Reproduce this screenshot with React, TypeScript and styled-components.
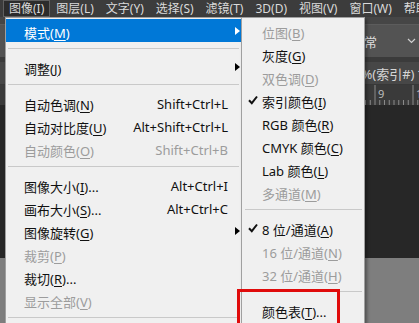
import React from "react";
import styled, { createGlobalStyle } from "styled-components";

const GlobalStyle = createGlobalStyle`
  html, body { margin: 0; padding: 0; background: #282828; }
  body { font-family: "Noto Sans", "Noto Sans CJK SC", sans-serif; }
`;

const Screen = styled.div`
  position: relative;
  width: 419px;
  height: 323px;
  overflow: hidden;
  display: flex;
  flex-direction: column;
  background: #282828;
`;

const MenuBar = styled.div`
  height: 17px;
  flex: none;
  display: flex;
  padding-left: 3px;
  background: #3c3c3c;
  overflow: hidden;
`;

const BarItem = styled.div<{ $active?: boolean }>`
  padding: 0 6px;
  font-size: 12px;
  line-height: 17px;
  color: #dadada;
  white-space: nowrap;
  background: ${(p) => (p.$active ? "#2c2c2c" : "transparent")};
  box-shadow: ${(p) => (p.$active ? "inset 0 0 0 1px #606060" : "none")};
`;

const TopStrip = styled.div`
  height: 7px;
  flex: none;
  background: #464646;
  border-bottom: 1px solid #5c5c5c;
`;

const OptionsBar = styled.div`
  height: 32px;
  flex: none;
  display: flex;
  align-items: center;
  justify-content: flex-end;
  padding-right: 3px;
  background: #535353;
`;

const BlendSelect = styled.div`
  display: flex;
  align-items: center;
  gap: 30px;
  font-size: 13px;
  color: #dedede;
`;

const Band = styled.div`
  height: 5px;
  flex: none;
  background: #3b3b3b;
`;

const TabBar = styled.div`
  height: 22px;
  flex: none;
  display: flex;
  justify-content: flex-end;
  align-items: center;
  overflow: hidden;
  background: #474747;
  border-bottom: 1px solid #383838;
`;

const TabTitle = styled.div`
  font-size: 13px;
  color: #d6d6d6;
  white-space: nowrap;
  margin-right: -6px;
`;

const Ruler = styled.svg`
  display: block;
  flex: none;
  background: #3a3a3a;
`;

const Canvas = styled.div`
  height: 153px;
  flex: none;
  background: #272727;
`;

const Pasteboard = styled.div`
  flex: 1;
  background: #7e7e7e;
`;

const Menu = styled.div<{ $left: number; $width: number; $z: number }>`
  position: absolute;
  top: 17px;
  left: ${(p) => p.$left}px;
  width: ${(p) => p.$width}px;
  height: 320px;
  box-sizing: border-box;
  padding: 1px 0 0 0;
  background: #f0f0f0;
  border: 1px solid #a0a0a0;
  z-index: ${(p) => p.$z};
  box-shadow: 2px 2px 3px rgba(0, 0, 0, 0.35);
`;

const Row = styled.div<{ $active?: boolean; $disabled?: boolean }>`
  height: 23px;
  box-sizing: border-box;
  padding-top: 3px;
  display: flex;
  align-items: center;
  font-size: 13px;
  white-space: nowrap;
  background: ${(p) => (p.$active ? "#0078d7" : "transparent")};
  color: ${(p) => (p.$active ? "#ffffff" : p.$disabled ? "#9c9c9c" : "#111111")};
`;

const Label = styled.span<{ $indent: number }>`
  flex: 1;
  padding-left: ${(p) => p.$indent}px;
  u {
    text-underline-offset: 2px;
  }
`;

const Shortcut = styled.span`
  padding-left: 12px;
`;

const ArrowCell = styled.span`
  width: 13px;
  display: flex;
  justify-content: flex-end;
  padding-right: 1px;
  box-sizing: border-box;
`;

const Triangle = styled.span<{ $light?: boolean }>`
  width: 0;
  height: 0;
  margin-top: -3px;
  border-top: 4.5px solid transparent;
  border-bottom: 4.5px solid transparent;
  border-left: 5px solid ${(p) => (p.$light ? "#ffffff" : "#000000")};
`;

const CheckCell = styled.span`
  width: 14px;
  margin-left: 6px;
  display: flex;
  align-items: center;
  margin-top: -3px;
`;

const Separator = styled.div<{ $inset: number }>`
  height: 13px;
  display: flex;
  align-items: center;
  padding: 0 2px 0 ${(p) => p.$inset}px;
  &::after {
    content: "";
    flex: 1;
    height: 1px;
    background: #c9c9c9;
  }
`;

const Highlight = styled.div`
  position: absolute;
  left: 237px;
  top: 289px;
  width: 103px;
  height: 44px;
  box-sizing: border-box;
  border: 3px solid #e00b0b;
  z-index: 5;
`;

type Item =
  | { sep: true }
  | {
      sep?: false;
      label: string;
      key: string;
      dots?: boolean;
      shortcut?: string;
      arrow?: boolean;
      active?: boolean;
      disabled?: boolean;
      checked?: boolean;
    };

const barItems = ["图像(I)", "图层(L)", "文字(Y)", "选择(S)", "滤镜(T)", "3D(D)", "视图(V)", "窗口(W)", "帮助(H)"];

const mainItems: Item[] = [
  { label: "模式", key: "M", arrow: true, active: true },
  { sep: true },
  { label: "调整", key: "J", arrow: true },
  { sep: true },
  { label: "自动色调", key: "N", shortcut: "Shift+Ctrl+L" },
  { label: "自动对比度", key: "U", shortcut: "Alt+Shift+Ctrl+L" },
  { label: "自动颜色", key: "O", shortcut: "Shift+Ctrl+B", disabled: true },
  { sep: true },
  { label: "图像大小", key: "I", dots: true, shortcut: "Alt+Ctrl+I" },
  { label: "画布大小", key: "S", dots: true, shortcut: "Alt+Ctrl+C" },
  { label: "图像旋转", key: "G", arrow: true },
  { label: "裁剪", key: "P", disabled: true },
  { label: "裁切", key: "R", dots: true },
  { label: "显示全部", key: "V", disabled: true },
  { sep: true },
];

const modeItems: Item[] = [
  { label: "位图", key: "B", disabled: true },
  { label: "灰度", key: "G" },
  { label: "双色调", key: "D", disabled: true },
  { label: "索引颜色", key: "I", checked: true },
  { label: "RGB 颜色", key: "R" },
  { label: "CMYK 颜色", key: "C" },
  { label: "Lab 颜色", key: "L" },
  { label: "多通道", key: "M", disabled: true },
  { sep: true },
  { label: "8 位/通道", key: "A", checked: true },
  { label: "16 位/通道", key: "N", disabled: true },
  { label: "32 位/通道", key: "H", disabled: true },
  { sep: true },
  { label: "颜色表", key: "T", dots: true },
];

const Check = () => (
  <svg width="10" height="10" viewBox="0 0 10 10">
    <path d="M1 5.2 L3.8 8.2 L9 1.5" fill="none" stroke="#111" strokeWidth="2" />
  </svg>
);

const Chevron = () => (
  <svg width="9" height="6" viewBox="0 0 9 6">
    <path d="M1 1 L4.5 4.5 L8 1" fill="none" stroke="#cfcfcf" strokeWidth="1.2" />
  </svg>
);

const RulerMarks = () => {
  const ticks = [];
  for (let i = 0; i < 90; i++) {
    const x = 375 - 38 * 9 + i * 4.75;
    const major = i % 8 === 0;
    ticks.push(
      <line key={i} x1={x} x2={x} y1={major ? 0 : 15} y2={20} stroke="#8a8a8a" strokeWidth="1" />
    );
  }
  return (
    <Ruler width="419" height="20" viewBox="0 0 419 20">
      {ticks}
      <text x="378" y="13" fontSize="11" fill="#bdbdbd" fontFamily="Noto Sans, sans-serif">9</text>
      <text x="416" y="13" fontSize="11" fill="#bdbdbd" fontFamily="Noto Sans, sans-serif">1</text>
    </Ruler>
  );
};

const MenuList = ({ items, sub }: { items: Item[]; sub?: boolean }) => (
  <>
    {items.map((it, i) =>
      it.sep ? (
        <Separator key={i} $inset={sub ? 3 : 2} />
      ) : (
        <Row key={i} $active={it.active} $disabled={it.disabled}>
          {sub && <CheckCell>{it.checked && <Check />}</CheckCell>}
          <Label $indent={sub ? 0 : 18}>
            {it.label}(<u>{it.key}</u>){it.dots ? "..." : ""}
          </Label>
          {it.shortcut && <Shortcut>{it.shortcut}</Shortcut>}
          {!sub && <ArrowCell>{it.arrow && <Triangle $light={it.active} />}</ArrowCell>}
        </Row>
      )
    )}
  </>
);

export default function App() {
  return (
    <Screen>
      <GlobalStyle />
      <MenuBar>
        {barItems.map((b, i) => (
          <BarItem key={b} $active={i === 0}>
            {b}
          </BarItem>
        ))}
      </MenuBar>
      <TopStrip />
      <OptionsBar>
        <BlendSelect>
          <span>常</span>
          <Chevron />
        </BlendSelect>
      </OptionsBar>
      <Band />
      <TabBar>
        <TabTitle>%(索引#) *</TabTitle>
      </TabBar>
      <RulerMarks />
      <Canvas />
      <Pasteboard />

      <Menu $left={5} $width={237} $z={2}>
        <MenuList items={mainItems} />
      </Menu>
      <Menu $left={241} $width={124} $z={3}>
        <MenuList items={modeItems} sub />
      </Menu>
      <Highlight />
    </Screen>
  );
}
